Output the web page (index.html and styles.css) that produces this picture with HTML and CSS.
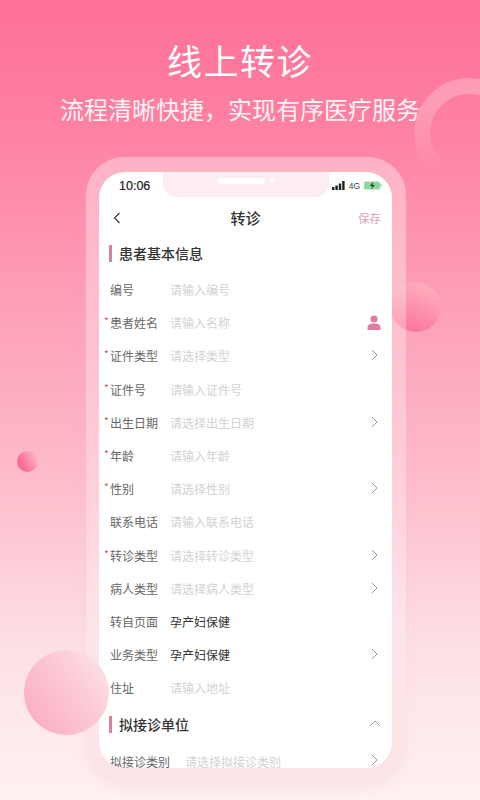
FILE: index.html
```html
<!DOCTYPE html>
<html lang="zh">
<head>
<meta charset="utf-8">
<title>线上转诊</title>
<link rel="stylesheet" href="styles.css">
</head>
<body>
<main class="poster">
  <div class="ring"></div>
  <div class="ball ball-right"></div>
  <header class="hero">
    <h1>线上转诊</h1>
    <p>流程清晰快捷，实现有序医疗服务</p>
  </header>
  <section class="phone">
    <div class="screen">
      <div class="notch"><span class="speaker"></span><span class="camera"></span></div>
      <div class="status">
        <span class="time">10:06</span>
        <span class="status-right">
          <svg class="signal" viewBox="0 0 14 9" width="14" height="9"><rect x="0" y="6" width="2.4" height="3" fill="#222"/><rect x="3.4" y="4.5" width="2.4" height="4.500" fill="#222"/><rect x="6.8" y="2.5" width="2.4" height="6.500" fill="#222"/><rect x="10.2" y="0" width="2.4" height="9" fill="#222"/></svg>
          <span class="net">4G</span>
          <svg class="battery" viewBox="0 0 18 9" width="18" height="9"><rect x="0" y="0.5" width="16" height="8" rx="1.5" fill="#8fd6a0"/><rect x="16.5" y="3" width="1.2" height="3" fill="#8fd6a0"/><path d="M9.5 0.8 5.8 5h2.400L7 8.200 11 4H8.500z" fill="#1d3b24"/></svg>
        </span>
      </div>
      <div class="nav">
        <svg class="back" viewBox="0 0 8 12" width="8" height="12"><path d="M6.5 1 1.500 6l5 5" fill="none" stroke="#333" stroke-width="1.100"/></svg>
        <span class="nav-title">转诊</span>
        <span class="save">保存</span>
      </div>
      <div class="section first"><i class="bar"></i><h2>患者基本信息</h2></div>
      <div class="row"><span class="label">编号</span><span class="hint">请输入编号</span></div>
      <div class="row"><span class="label req">患者姓名</span><span class="hint">请输入名称</span>
        <svg class="person" viewBox="0 0 14 15" width="14" height="15"><circle cx="7" cy="4" r="3.600" fill="#dd7f9b"/><path d="M0.5 15v-2.500C0.5 9.600 3 8.400 7 8.400s6.500 1.200 6.500 4.100V15z" fill="#dd7f9b"/></svg></div>
      <div class="row"><span class="label req">证件类型</span><span class="hint">请选择类型</span><svg class="chev" viewBox="0 0 7 12" width="7" height="12"><path d="M1 1l5 5-5 5" fill="none" stroke="#999" stroke-width="1"/></svg></div>
      <div class="row"><span class="label req">证件号</span><span class="hint">请输入证件号</span></div>
      <div class="row"><span class="label req">出生日期</span><span class="hint">请选择出生日期</span><svg class="chev" viewBox="0 0 7 12" width="7" height="12"><path d="M1 1l5 5-5 5" fill="none" stroke="#999" stroke-width="1"/></svg></div>
      <div class="row"><span class="label req">年龄</span><span class="hint">请输入年龄</span></div>
      <div class="row"><span class="label req">性别</span><span class="hint">请选择性别</span><svg class="chev" viewBox="0 0 7 12" width="7" height="12"><path d="M1 1l5 5-5 5" fill="none" stroke="#999" stroke-width="1"/></svg></div>
      <div class="row"><span class="label">联系电话</span><span class="hint">请输入联系电话</span></div>
      <div class="row"><span class="label req">转诊类型</span><span class="hint">请选择转诊类型</span><svg class="chev" viewBox="0 0 7 12" width="7" height="12"><path d="M1 1l5 5-5 5" fill="none" stroke="#999" stroke-width="1"/></svg></div>
      <div class="row"><span class="label">病人类型</span><span class="hint">请选择病人类型</span><svg class="chev" viewBox="0 0 7 12" width="7" height="12"><path d="M1 1l5 5-5 5" fill="none" stroke="#999" stroke-width="1"/></svg></div>
      <div class="row"><span class="label">转自页面</span><span class="value">孕产妇保健</span></div>
      <div class="row"><span class="label">业务类型</span><span class="value">孕产妇保健</span><svg class="chev" viewBox="0 0 7 12" width="7" height="12"><path d="M1 1l5 5-5 5" fill="none" stroke="#999" stroke-width="1"/></svg></div>
      <div class="row"><span class="label">住址</span><span class="hint">请输入地址</span></div>
      <div class="section second"><i class="bar"></i><h2>拟接诊单位</h2>
        <svg class="up" viewBox="0 0 12 7" width="12" height="7"><path d="M1 6l5-5 5 5" fill="none" stroke="#999" stroke-width="1"/></svg></div>
      <div class="row last"><span class="label">拟接诊类别</span><span class="hint">请选择拟接诊类别</span><svg class="chev" viewBox="0 0 7 12" width="7" height="12"><path d="M1 1l5 5-5 5" fill="none" stroke="#999" stroke-width="1"/></svg></div>
    </div>
  </section>
  <div class="ball ball-small"></div>
  <div class="ball ball-big"></div>
</main>
</body>
</html>
```
FILE: styles.css
```css
* { box-sizing: border-box; }
html, body { margin: 0; padding: 0; }
body { width: 480px; height: 800px; overflow: hidden; font-family: "Noto Sans CJK SC", "Noto Sans", sans-serif; }
.poster {
  position: relative; width: 480px; height: 800px; overflow: hidden;
  background: linear-gradient(180deg, #fe7096 0%, #fe80a1 15%, #fd9fb7 38%, #febccb 60%, #fddfe4 80%, #fff2f0 100%);
}
.hero { text-align: center; color: #fff; padding-top: 35px; height: 157px; }
.hero h1 { margin: 0; font-size: 35px; line-height: 50px; font-weight: 400; letter-spacing: 1.500px; }
.hero p { margin: 0; padding-top: 7px; font-size: 24px; line-height: 34px; font-weight: 400; color: #fff3f6; }
.ring {
  position: absolute; left: 414px; top: 78px; width: 110px; height: 110px; border-radius: 50%;
  border: 16px solid rgba(255,255,255,.24);
  -webkit-mask-image: linear-gradient(180deg, #000 25%, transparent 85%);
  mask-image: linear-gradient(180deg, #000 25%, transparent 85%);
}
.ball { position: absolute; border-radius: 50%; z-index: 2; }
.ball-right { z-index: 0; left: 391px; top: 282px; width: 50px; height: 50px; background: linear-gradient(205deg, #ffa9bb 20%, #fb6f94 95%); }
.ball-small { left: 17px; top: 451px; width: 21px; height: 21px; background: linear-gradient(60deg, #fa6f95 30%, #ffbccb 95%); }
.ball-big { left: 24px; top: 650px; width: 85px; height: 85px; background: linear-gradient(55deg, #fbadc3 10%, #fcc8d4 55%, #fee6ea 100%); }
.phone {
  position: relative; z-index: 1; margin-left: 86px; width: 320px; height: 628px; padding: 15px 13px 15px;
  border-radius: 38px; background: linear-gradient(180deg, rgba(255,255,255,.36), rgba(255,255,255,.26) 70%, rgba(250,215,222,.5));
  box-shadow: 0 6px 12px rgba(245,190,205,.18);
}
.screen { position: relative; width: 293px; height: 596px; background: #fff; border-radius: 26px; overflow: hidden; }
.notch { position: absolute; left: 64px; top: 0; width: 166px; height: 25px; background: #fdecf1; border-radius: 0 0 14px 14px; display: flex; justify-content: center; align-items: center; gap: 5px; padding-bottom: 8px; }
.speaker { width: 48px; height: 6px; border-radius: 3px; background: #fff; }
.camera { width: 5px; height: 5px; border-radius: 50%; background: #fff; }
.status { height: 27px; display: flex; justify-content: space-between; align-items: center; padding: 0 10px 0 20px; position: relative; }
.time { font-family: "Liberation Sans", sans-serif; font-size: 12.500px; color: #222; -webkit-text-stroke: .2px #222; }
.status-right { display: flex; align-items: center; gap: 3px; }
.net { font-family: "Liberation Sans", sans-serif; font-size: 8.500px; color: #444; margin-right: 1px; }
.nav { height: 37px; display: flex; align-items: center; justify-content: center; position: relative; }
.back { position: absolute; left: 14px; top: 13px; }
.nav-title { font-size: 15px; font-weight: 500; color: #333; }
.save { position: absolute; right: 11px; top: 10px; font-size: 11.500px; line-height: 18px; color: #dba3b7; }
.section { display: flex; align-items: center; position: relative; height: 34px; padding-left: 10px; }
.section h2 { margin: 0 0 0 7px; font-size: 14px; font-weight: 500; color: #333; }
.bar { width: 3px; height: 17px; background: #dc7f9a; }
.first { margin-bottom: 3px; }
.second { height: 40px; }
.up { position: absolute; right: 11px; top: 16px; }
.row { height: 33.200px; display: flex; align-items: center; position: relative; padding-left: 11px; }
.label { width: 60px; flex: none; font-size: 12px; color: #666; white-space: nowrap; position: relative; }
.req::before { content: "*"; position: absolute; left: -6px; top: -1px; color: #c9486e; font-size: 10px; }
.hint { font-size: 12px; color: #d2d2d2; white-space: nowrap; }
.value { font-size: 12px; color: #333; }
.person { position: absolute; right: 11px; top: 9px; }
.chev { position: absolute; right: 14px; top: 10px; }
.last .label { width: 75px; }
```
